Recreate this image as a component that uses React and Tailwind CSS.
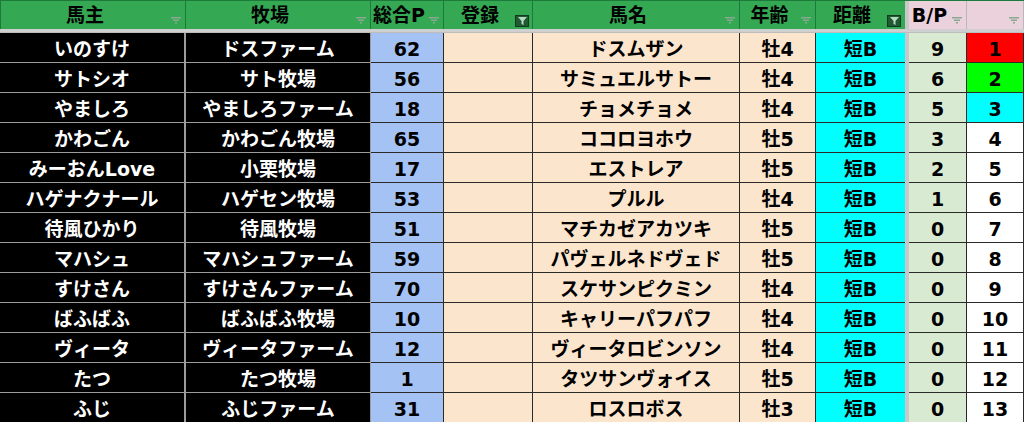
import React from 'react';

const rows = [
  ['いのすけ', 'ドスファーム', 62, 'ドスムザン', '牡4', '短B', 9, 1],
  ['サトシオ', 'サト牧場', 56, 'サミュエルサトー', '牡4', '短B', 6, 2],
  ['やましろ', 'やましろファーム', 18, 'チョメチョメ', '牡4', '短B', 5, 3],
  ['かわごん', 'かわごん牧場', 65, 'ココロヨホウ', '牡5', '短B', 3, 4],
  ['みーおんLove', '小栗牧場', 17, 'エストレア', '牡5', '短B', 2, 5],
  ['ハゲナクナール', 'ハゲセン牧場', 53, 'プルル', '牡4', '短B', 1, 6],
  ['待風ひかり', '待風牧場', 51, 'マチカゼアカツキ', '牡5', '短B', 0, 7],
  ['マハシュ', 'マハシュファーム', 59, 'パヴェルネドヴェド', '牡5', '短B', 0, 8],
  ['すけさん', 'すけさんファーム', 70, 'スケサンピクミン', '牡4', '短B', 0, 9],
  ['ばふばふ', 'ばふばふ牧場', 10, 'キャリーパフパフ', '牡4', '短B', 0, 10],
  ['ヴィータ', 'ヴィータファーム', 12, 'ヴィータロビンソン', '牡4', '短B', 0, 11],
  ['たつ', 'たつ牧場', 1, 'タツサンヴォイス', '牡5', '短B', 0, 12],
  ['ふじ', 'ふじファーム', 31, 'ロスロボス', '牡3', '短B', 0, 13],
];

const rankBg = { 1: 'bg-[#ff0000]', 2: 'bg-[#00ff00]', 3: 'bg-[#00ffff]' };

function FilterIcon() {
  return (
    <svg className="absolute right-[4px] bottom-[5px]" width="10" height="7" viewBox="0 0 10 7">
      <rect x="0" y="0" width="10" height="1.5" fill="#8aa892" />
      <rect x="2" y="2.5" width="6" height="1.5" fill="#8aa892" />
      <rect x="4" y="5" width="2" height="1.5" fill="#8aa892" />
    </svg>
  );
}

function ActiveFilter() {
  return (
    <span className="absolute right-[3px] bottom-[2px] w-[14px] h-[12px] bg-[#1f5a32] border border-[#0f3a1e] flex items-center justify-center">
      <svg width="9" height="8" viewBox="0 0 9 8">
        <path d="M0 0 H9 L5.5 4 V8 L3.5 7 V4 Z" fill="#b9d8c2" />
      </svg>
    </span>
  );
}

function Head({ w, label, active, pink, border = 'border-[#1c7a3a]' }) {
  return (
    <div
      className={`relative h-full shrink-0 border-r ${border} flex items-center justify-center pr-4 ${w} ${
        pink ? 'bg-[#ead1dc]' : 'bg-[#34a853]'
      }`}
    >
      <span className="whitespace-nowrap">{label}</span>
      {active ? <ActiveFilter /> : <FilterIcon />}
    </div>
  );
}

export default function App() {
  const cell = 'shrink-0 border-b flex items-center justify-center whitespace-nowrap pt-[3px]';
  return (
    <div
      className="w-[1024px] h-[422px] overflow-hidden bg-white text-[19px] font-bold text-black leading-none"
      style={{ fontFamily: '"DejaVu Sans", "Noto Sans CJK JP", sans-serif' }}
    >
      {/* header */}
      <div className="flex h-[29px] border-t border-[#1c7a3a]">
        <Head w="w-[186px] border-l" label="馬主" />
        <Head w="w-[185px]" label="牧場" />
        <Head w="w-[73px]" label="総合P" />
        <Head w="w-[89px]" label="登録" active />
        <Head w="w-[207px]" label="馬名" />
        <Head w="w-[76px]" label="年齢" />
        <Head w="w-[89px]" label="距離" active border="border-transparent" />
        <div className="w-[4px] shrink-0 bg-[#c8c8c8]" />
        <Head w="w-[58px]" label="B/P" pink border="border-[#b8b8b8]" />
        <Head w="w-[57px]" label="" pink border="border-[#b8b8b8]" />
      </div>
      <div className="h-[4px] bg-[#cfcfcf] border-b border-[#bdbdbd]" />

      {/* body */}
      {rows.map((r) => (
        <div key={r[0]} className="flex h-[30px]">
          <div className={`${cell} w-[186px] bg-black text-white border-r-2 border-[#9c9c9c]`}>{r[0]}</div>
          <div className={`${cell} w-[185px] bg-black text-white border-r border-[#9c9c9c]`}>{r[1]}</div>
          <div className={`${cell} w-[73px] bg-[#a4c2f4] border-r border-[#2a2a2a]`}>{r[2]}</div>
          <div className={`${cell} w-[89px] bg-[#fce5cd] border-r border-[#2a2a2a]`} />
          <div className={`${cell} w-[207px] bg-[#fce5cd] border-r border-[#2a2a2a]`}>{r[3]}</div>
          <div className={`${cell} w-[76px] bg-[#fce5cd] border-r border-[#2a2a2a]`}>{r[4]}</div>
          <div className={`${cell} w-[89px] bg-[#00ffff] border-[#2a2a2a]`}>{r[5]}</div>
          <div className="w-[4px] shrink-0 bg-[#c8c8c8]" />
          <div className={`${cell} w-[58px] bg-[#d9ead3] border-r border-[#2a2a2a]`}>{r[6]}</div>
          <div className={`${cell} w-[57px] border-r border-[#2a2a2a] ${rankBg[r[7]] || 'bg-white'}`}>{r[7]}</div>
        </div>
      ))}
    </div>
  );
}
